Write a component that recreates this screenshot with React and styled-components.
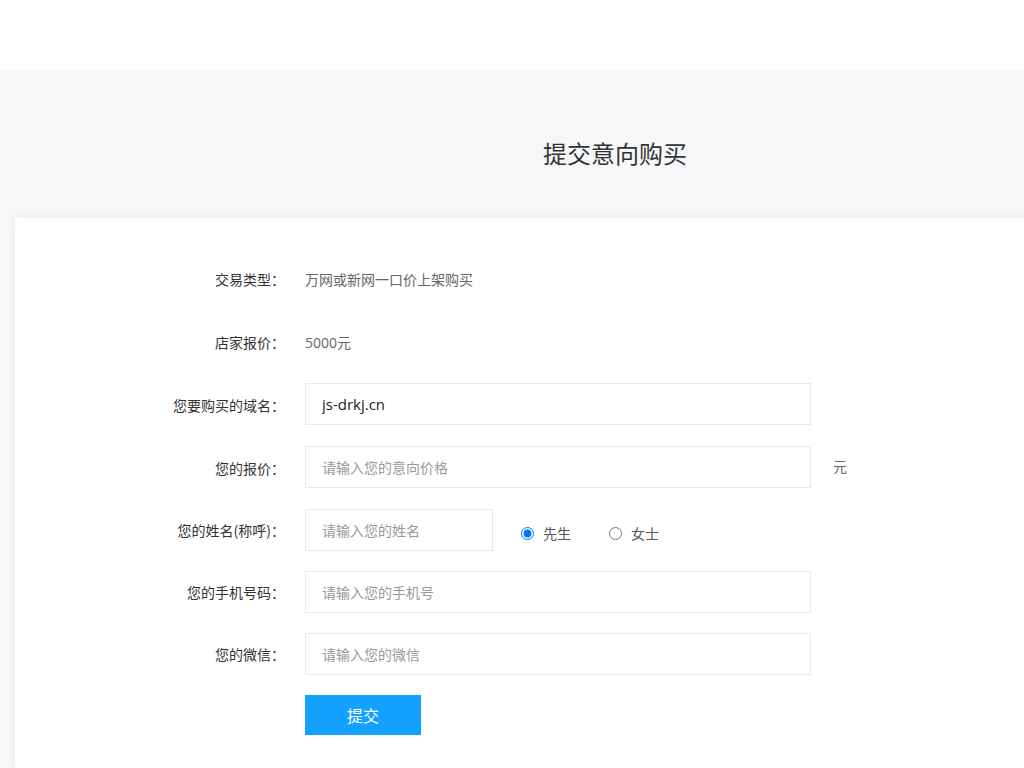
import React, { useState } from "react";
import styled, { createGlobalStyle } from "styled-components";

const Global = createGlobalStyle`
  html, body { margin: 0; padding: 0; overflow: hidden; }
  body {
    background: #f6f7f9;
    font-family: "Open Sans", "Noto Sans CJK SC", sans-serif;
    color: #333;
  }
`;

const Header = styled.div`
  height: 70px;
  background: #fff;
`;

const Main = styled.div`
  width: 1200px;
  margin-left: 15px;
  padding-bottom: 40px;
`;

const Title = styled.h1`
  margin: 0;
  height: 148px;
  display: flex;
  align-items: center;
  justify-content: center;
  font-size: 24px;
  font-weight: 400;
  color: #333;
  font-family: "Noto Sans CJK SC", sans-serif;
  padding-top: 16px;
  box-sizing: border-box;
`;

const Card = styled.div`
  background: #fff;
  box-shadow: 0 0 12px rgba(0, 0, 0, 0.06);
  padding: 40px 0 40px;
  display: flex;
  flex-direction: column;
  gap: 20px;
`;

const Row = styled.div`
  display: flex;
  align-items: center;
  height: ${(p) => p.$h || 42}px;
`;

const Label = styled.div`
  width: 270px;
  margin-right: 20px;
  text-align: right;
  font-size: 14px;
  color: #333;
  font-family: "Noto Sans CJK SC", sans-serif;
`;

const Value = styled.div`
  font-size: 14px;
  color: #666;
  font-family: "Open Sans", "Noto Sans CJK SC", sans-serif;
`;

const Input = styled.input`
  box-sizing: border-box;
  align-self: flex-start;
  width: ${(p) => p.$w || 506}px;
  height: 42px;
  border: 1px solid #e8e8e8;
  outline: none;
  padding: 0 16px;
  font-size: 15px;
  color: #222;
  font-family: "Open Sans", "Noto Sans CJK SC", sans-serif;
  &::placeholder {
    color: #999;
    font-size: 14px;
    font-family: "Noto Sans CJK SC", sans-serif;
  }
`;

const Unit = styled.span`
  margin-left: 22px;
  margin-bottom: 3px;
  font-size: 14px;
  color: #666;
  font-family: "Noto Sans CJK SC", sans-serif;
`;

const RadioGroup = styled.div`
  display: flex;
  align-items: center;
  margin-left: 26px;
  margin-top: 6px;
  gap: 36px;
`;

const RadioLabel = styled.label`
  display: flex;
  align-items: center;
  gap: 9px;
  font-size: 14px;
  color: #555;
  font-family: "Noto Sans CJK SC", sans-serif;
  input { margin: 0 0 0 2px; width: 13px; height: 13px; }
`;

const Button = styled.button`
  width: 116px;
  height: 40px;
  border: none;
  background: #12a1ff;
  color: #fff;
  font-size: 16px;
  font-family: "Noto Sans CJK SC", sans-serif;
  cursor: pointer;
  margin-left: 290px;
`;

export default function App() {
  const [sex, setSex] = useState("m");
  return (
    <>
      <Global />
      <Header />
      <Main>
        <Title>提交意向购买</Title>
        <Card>
          <Row>
            <Label>交易类型：</Label>
            <Value>万网或新网一口价上架购买</Value>
          </Row>
          <Row $h={43}>
            <Label>店家报价：</Label>
            <Value>5000元</Value>
          </Row>
          <Row $h={43}>
            <Label>您要购买的域名：</Label>
            <Input defaultValue="js-drkj.cn" />
          </Row>
          <Row $h={43}>
            <Label>您的报价：</Label>
            <Input placeholder="请输入您的意向价格" />
            <Unit>元</Unit>
          </Row>
          <Row>
            <Label>您的姓名(称呼)：</Label>
            <Input $w={188} placeholder="请输入您的姓名" />
            <RadioGroup>
              <RadioLabel>
                <input type="radio" name="sex" checked={sex === "m"} onChange={() => setSex("m")} />
                先生
              </RadioLabel>
              <RadioLabel>
                <input type="radio" name="sex" checked={sex === "f"} onChange={() => setSex("f")} />
                女士
              </RadioLabel>
            </RadioGroup>
          </Row>
          <Row>
            <Label>您的手机号码：</Label>
            <Input placeholder="请输入您的手机号" />
          </Row>
          <Row>
            <Label>您的微信：</Label>
            <Input placeholder="请输入您的微信" />
          </Row>
          <Row $h={40}>
            <Button>提交</Button>
          </Row>
        </Card>
      </Main>
    </>
  );
}
